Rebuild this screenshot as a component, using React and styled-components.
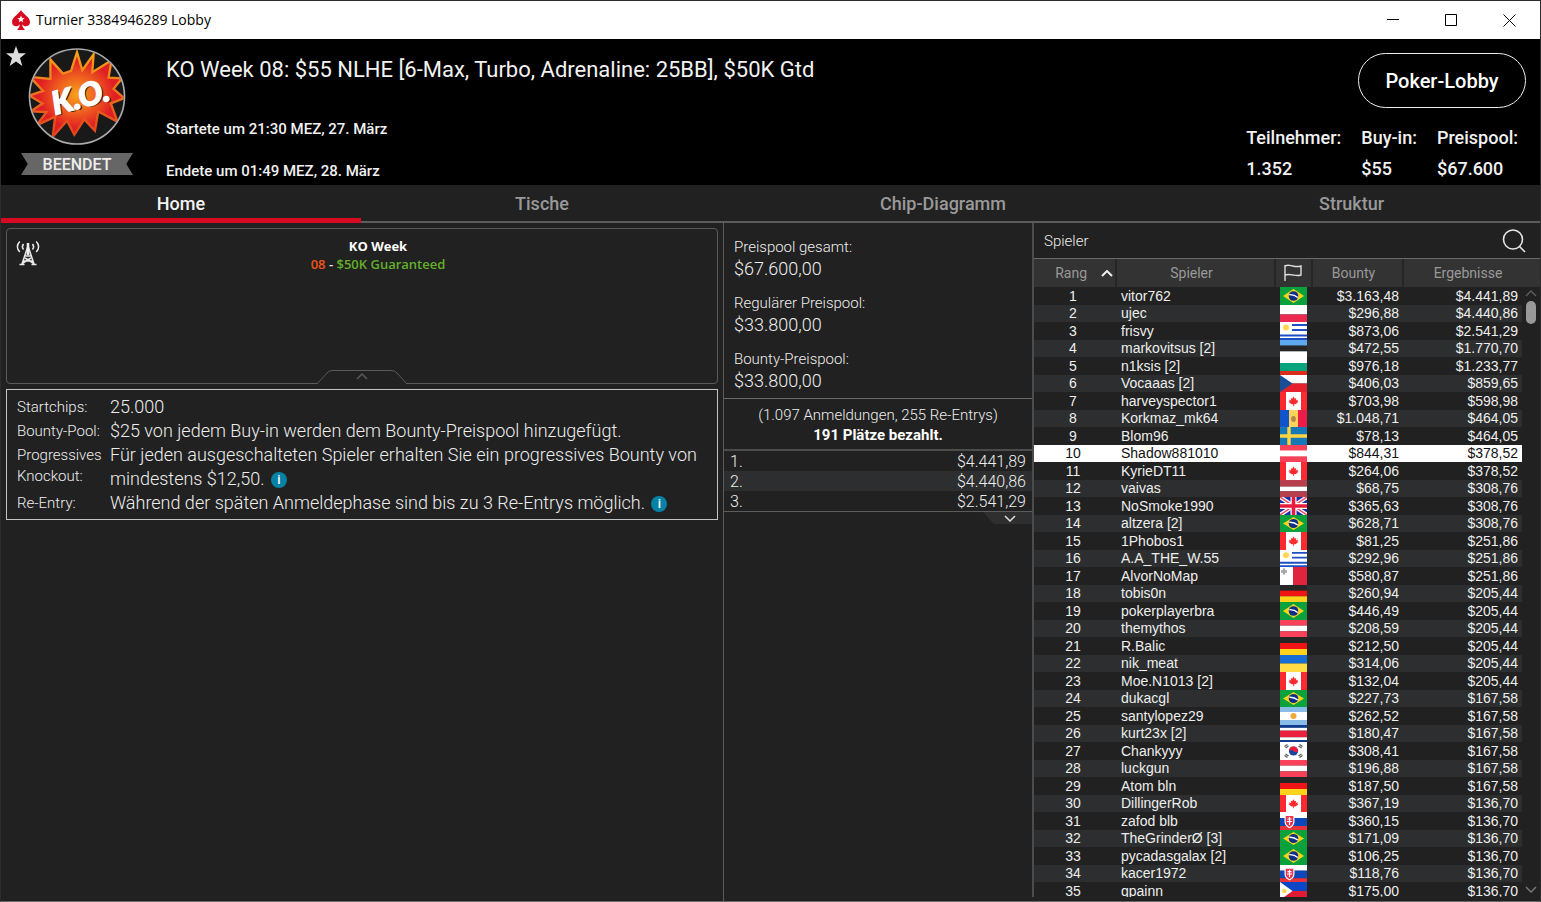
import React from 'react'
import styled, { createGlobalStyle } from 'styled-components'

const GlobalStyle = createGlobalStyle`
* {
  box-sizing: border-box;
}

body {
  margin: 0;
  background: #212121;
}

button {
  padding: 0;
  border: 0;
  background: none;
  color: inherit;
  font: inherit;
}

svg {
  display: block;
}
`

const players = [
  [1, 'vitor762', 'br', '$3.163,48', '$4.441,89'],
  [2, 'ujec', 'pl', '$296,88', '$4.440,86'],
  [3, 'frisvy', 'uy', '$873,06', '$2.541,29'],
  [4, 'markovitsus [2]', 'ee', '$472,55', '$1.770,70'],
  [5, 'n1ksis [2]', 'bg', '$976,18', '$1.233,77'],
  [6, 'Vocaaas [2]', 'cz', '$406,03', '$859,65'],
  [7, 'harveyspector1', 'ca', '$703,98', '$598,98'],
  [8, 'Korkmaz_mk64', 'md', '$1.048,71', '$464,05'],
  [9, 'Blom96', 'se', '$78,13', '$464,05'],
  [10, 'Shadow881010', 'at', '$844,31', '$378,52'],
  [11, 'KyrieDT11', 'ca', '$264,06', '$378,52'],
  [12, 'vaivas', 'lv', '$68,75', '$308,76'],
  [13, 'NoSmoke1990', 'gb', '$365,63', '$308,76'],
  [14, 'altzera [2]', 'br', '$628,71', '$308,76'],
  [15, '1Phobos1', 'ca', '$81,25', '$251,86'],
  [16, 'A.A_THE_W.55', 'uy', '$292,96', '$251,86'],
  [17, 'AlvorNoMap', 'mt', '$580,87', '$251,86'],
  [18, 'tobis0n', 'de', '$260,94', '$205,44'],
  [19, 'pokerplayerbra', 'br', '$446,49', '$205,44'],
  [20, 'themythos', 'at', '$208,59', '$205,44'],
  [21, 'R.Balic', 'de', '$212,50', '$205,44'],
  [22, 'nik_meat', 'ua', '$314,06', '$205,44'],
  [23, 'Moe.N1013 [2]', 'ca', '$132,04', '$205,44'],
  [24, 'dukacgl', 'br', '$227,73', '$167,58'],
  [25, 'santylopez29', 'ar', '$262,52', '$167,58'],
  [26, 'kurt23x [2]', 'cr', '$180,47', '$167,58'],
  [27, 'Chankyyy', 'kr', '$308,41', '$167,58'],
  [28, 'luckgun', 'at', '$196,88', '$167,58'],
  [29, 'Atom bln', 'de', '$187,50', '$167,58'],
  [30, 'DillingerRob', 'ca', '$367,19', '$136,70'],
  [31, 'zafod blb', 'sk', '$360,15', '$136,70'],
  [32, 'TheGrinderØ [3]', 'br', '$171,09', '$136,70'],
  [33, 'pycadasgalax [2]', 'br', '$106,25', '$136,70'],
  [34, 'kacer1972', 'sk', '$118,76', '$136,70'],
  [35, 'qpainn', 'ph', '$175,00', '$136,70']
]

// horizontal bands: [colour, height], drawn from the top
const Bands = ({ of }) => {
  let y = 0
  return of.map(([fill, h], i) => {
    const band = <rect key={i} y={y} width='27' height={h} fill={fill} />
    y += h
    return band
  })
}

const flags = {
  br: (
    <>
      <rect width='27' height='18' fill='#0ba13c' />
      <path d='M3 9L13.500 2L24 9L13.500 16z' fill='#fbd51c' />
      <circle cx='13.500' cy='9' r='4.800' fill='#0b3087' />
      <path d='M9.300 7.700C12.300 7.500 15.500 8.500 17.800 10.500' stroke='#fff' strokeWidth='1.400' fill='none' />
    </>
  ),
  pl: <Bands of={[['#fff', 10], ['#ec2a50', 8]]} />,
  uy: (
    <>
      <rect width='27' height='18' fill='#fff' />
      <path d='M12 3h15M12 8h15M0 13.500h27M0 17h27' stroke='#1c4fc4' strokeWidth='1.900' />
      <circle cx='6' cy='5.500' r='3' fill='#ffd84f' />
    </>
  ),
  ee: <Bands of={[['#5fa9ee', 6], ['#262626', 6], ['#fff', 6]]} />,
  bg: <Bands of={[['#fff', 6], ['#0aa37b', 8], ['#dd2c1c', 4]]} />,
  cz: (
    <>
      <Bands of={[['#fff', 9], ['#e6202c', 9]]} />
      <path d='M0 0L12.500 9L0 18z' fill='#1a4f98' />
    </>
  ),
  ca: (
    <>
      <rect width='27' height='18' fill='#fff' />
      <path d='M0 0h6v18H0zM21 0h6v18h-6z' fill='#ff2a2f' />
      <path d='M13.500 4.500l1.300 2.200 1.400-.6-.4 2.400 2-.9-.3 1.800 1 .4-3 2.400h-1.600v1.900h-.8v-1.900h-1.600l-3-2.400 1-.4-.3-1.800 2 .9-.4-2.400 1.400.6z' fill='#ff2a2f' />
    </>
  ),
  md: (
    <>
      <rect width='9' height='18' fill='#1054cc' />
      <rect x='9' width='9' height='18' fill='#ffd25a' />
      <rect x='18' width='9' height='18' fill='#ec1c48' />
      <ellipse cx='13.500' cy='9.500' rx='2.400' ry='3.200' fill='#b3864a' />
    </>
  ),
  se: (
    <>
      <rect width='27' height='18' fill='#1778b8' />
      <path d='M9 0v18M0 9h27' stroke='#ffd23f' strokeWidth='3.400' />
    </>
  ),
  at: <Bands of={[['#f9415a', 6], ['#fff', 6], ['#f9415a', 6]]} />,
  lv: <Bands of={[['#b73e4c', 7], ['#fff', 5], ['#b73e4c', 6]]} />,
  gb: (
    <>
      <rect width='27' height='18' fill='#1a2fa8' />
      <path d='M0 0L27 18M27 0L0 18' stroke='#fff' strokeWidth='4' />
      <path d='M0 0L27 18M27 0L0 18' stroke='#f0506e' strokeWidth='1.500' />
      <path d='M13.500 0v18M0 9h27' stroke='#fff' strokeWidth='6' />
      <path d='M13.500 0v18M0 9h27' stroke='#e81c3c' strokeWidth='3.600' />
    </>
  ),
  mt: (
    <>
      <rect width='27' height='18' fill='#fff' />
      <rect x='13' width='14' height='18' fill='#df2440' />
      <path d='M4 1.500v6M1 4.500h6' stroke='#a5a5a5' strokeWidth='2.400' />
    </>
  ),
  de: <Bands of={[['#262626', 6], ['#f01414', 6], ['#ffd21c', 6]]} />,
  ua: <Bands of={[['#176ed2', 9], ['#ffdc46', 9]]} />,
  ar: (
    <>
      <Bands of={[['#8abce8', 5], ['#fff', 8], ['#8abce8', 5]]} />
      <circle cx='13.500' cy='9' r='3' fill='#f0a838' />
    </>
  ),
  cr: <Bands of={[['#0f3c90', 3], ['#fff', 3], ['#e8203c', 7], ['#fff', 3], ['#0f3c90', 2]]} />,
  kr: (
    <>
      <rect width='27' height='18' fill='#fff' />
      <circle cx='13.500' cy='9' r='4.600' fill='#1448a0' />
      <path d='M8.900 9a4.600 4.600 0 0 1 9.200 0c-1.500 2-3.500 1.500-4.600 0s-3-1.500-4.600 0z' fill='#e81c3c' />
      <path d='M4.500 4.500l3-2M5.500 6l3-2M4.500 13.500l3 2M5.500 12l3 2M22.500 4.500l-3-2M21.500 6l-3-2M22.500 13.500l-3 2M21.500 12l-3 2' stroke='#555' strokeWidth='1.200' />
    </>
  ),
  sk: (
    <>
      <Bands of={[['#fff', 6], ['#0d47b8', 8], ['#e8323c', 4]]} />
      <path d='M4.500 3h10v6.500c0 3.500-2.500 5.500-5 6.800-2.500-1.300-5-3.300-5-6.800z' fill='#fff' />
      <path d='M5.700 4h7.600v5.500c0 2.800-1.800 4.500-3.800 5.500-2-1-3.800-2.700-3.800-5.500z' fill='#ec3450' />
      <path d='M9.500 5v8M7.500 7h4M7 9.500h5' stroke='#fff' strokeWidth='1.200' />
    </>
  ),
  ph: (
    <>
      <Bands of={[['#0d47c8', 9], ['#e01c34', 9]]} />
      <path d='M0 0L12.500 9L0 18z' fill='#fff' />
      <circle cx='4.300' cy='9' r='2.200' fill='#ffd84f' />
    </>
  )
}

const Window = styled.div`
display: flex;
flex-direction: column;
height: 100vh;
border: 1px solid #2c2c2c;
border-bottom-color: #666;
background: #212121;
color: #eee;
font-family: Roboto, "Liberation Sans", sans-serif;
`

const TitleBar = styled.div`
display: flex;
flex: none;
align-items: center;
height: 38px;
padding: 0 2px 0 11px;
background: #fff;
color: #000;
font: 14px/20px "Open Sans", sans-serif;

span {
  flex: 1;
  margin-left: 6px;
}
`

const WindowButton = styled.button`
display: flex;
align-items: center;
justify-content: center;
width: 58px;
height: 36px;
`

const Header = styled.header`
display: flex;
flex: none;
height: 146px;
background: #000;
color: #f2f2f2;
`

const Emblem = styled.div`
display: flex;
width: 165px;
padding: 7px 0 0 4px;
`

const Favourite = styled.button`
align-self: flex-start;
width: 22px;
height: 20px;
`

const Badge = styled.div`
display: flex;
flex-direction: column;
align-items: center;
width: 112px;
margin-left: -6px;
padding-top: 2px;
`

const Ribbon = styled.div`
width: 112px;
height: 22px;
margin-top: 8px;
background: #666;
clip-path: polygon(0 0, 100% 0, 94% 50%, 100% 100%, 0 100%, 6% 50%);
color: #eee;
font-size: 16px;
font-weight: 500;
line-height: 24px;
text-align: center;
`

const Summary = styled.div`
flex: 1;
padding-top: 17px;
font-size: 15px;
font-weight: 500;
line-height: 20px;

h1 {
  margin: 0 0 35px;
  font-size: 22px;
  font-weight: 400;
  line-height: 28px;
}

p {
  margin: 0 0 22px;
}
`

const HeaderSide = styled.div`
display: flex;
flex-direction: column;
align-items: flex-end;
padding: 14px 14px 0 0;
`

const LobbyButton = styled.button`
width: 168px;
height: 55px;
border: 1px solid #eee;
border-radius: 28px;
color: #fff;
font-size: 20px;
font-weight: 500;
`

const Stats = styled.dl`
display: flex;
gap: 20px;
margin: 14px 8px 0 0;
font-size: 18px;
font-weight: 500;
line-height: 31px;

dd {
  margin: 0;
}
`

const Tabs = styled.nav`
display: grid;
flex: none;
grid-template-columns: 360fr 362fr 440fr 377fr;
height: 38px;
box-shadow: inset 0 -2px #5c5c5c;
`

const Tab = styled.button`
padding-top: 5px;
border-bottom: 5px solid ${p => p.$active ? '#d70a22' : 'transparent'};
color: ${p => p.$active ? '#f2f2f2' : '#999'};
font-size: 18px;
font-weight: 500;
line-height: 28px;
`

const Content = styled.main`
display: grid;
flex: 1;
grid-template-columns: minmax(0, 1fr) 309px 508px;
min-height: 0;
`

const HomePane = styled.section`
display: flex;
flex-direction: column;
gap: 5px;
padding: 5px 5px 0;
`

const Announcement = styled.div`
position: relative;
height: 156px;
padding: 8px 0 0 32px;
border: 1px solid #5a5a5a;
border-radius: 4px;
font: 600 13px/18px "Open Sans", sans-serif;
text-align: center;

h2 {
  margin: 0;
  color: #fff;
  font-size: 13px;
  font-weight: 700;
}
`

const Tower = styled.svg`
position: absolute;
top: 11px;
left: 9px;
`

const CollapseButton = styled.button`
position: absolute;
bottom: -1px;
left: calc(50% - 45px);
`

const Accent = styled.span`
color: ${p => p.$color};
`

const Details = styled.dl`
display: grid;
grid-template-columns: 93px 1fr;
margin: 0;
padding: 5px 10px 4px;
border: 1px solid #c4c4c4;
font-weight: 300;
line-height: 24px;

dt {
  padding-top: 2px;
  font-size: 15px;
  line-height: 21px;
}

dd {
  margin: 0;
  font-size: 18px;
}
`

const InfoButton = styled.button`
display: inline-flex;
justify-content: center;
width: 16px;
height: 16px;
margin-left: 2px;
border-radius: 8px;
background: #0582a5;
color: #fff;
font-size: 13px;
font-weight: 500;
line-height: 16px;
vertical-align: 1px;
`

const PrizePane = styled.section`
border-left: 1px solid #5c5c5c;
font-weight: 300;
`

const Pools = styled.dl`
display: grid;
gap: 12px;
margin: 0;
padding: 13px 10px 6px;
border-bottom: 1px solid #6a6a6a;
line-height: 22px;

dt {
  font-size: 15px;
}

dd {
  margin: 0;
  font-size: 18px;
}
`

const Entries = styled.div`
padding: 6px 0 4px;
border-bottom: 2px solid #4c4c4c;
font-size: 15px;
line-height: 20px;
text-align: center;

strong {
  display: block;
  color: #fff;
  font-weight: 700;
}
`

const Payouts = styled.table`
width: 100%;
border-collapse: collapse;
border-bottom: 1px solid #5c5c5c;
font-size: 16px;
line-height: 18px;

td {
  padding: 2px 6px 0;
}

td:last-child {
  text-align: right;
}

tr:nth-child(even) {
  background: #2c2e2f;
}
`

const ExpandButton = styled.button`
display: flex;
align-items: center;
justify-content: center;
width: 49px;
height: 12px;
margin-left: auto;
padding-left: 4px;
background: #2f2f2f;
clip-path: polygon(0 0, 100% 0, 100% 100%, 22% 100%);
`

const PlayersPane = styled.section`
display: flex;
flex-direction: column;
min-height: 0;
margin-bottom: 4px;
border-left: 2px solid #4c4c4c;
`

const SearchBar = styled.div`
display: flex;
flex: none;
align-items: center;
justify-content: space-between;
height: 36px;
padding: 0 14px 0 10px;
border-bottom: 1px solid #6a6a6a;

h2 {
  margin: 0;
  font-size: 15px;
  font-weight: 300;
}
`

const PlayerScroll = styled.div`
position: relative;
flex: 1;
min-height: 0;
overflow: hidden;
`

const PlayerTable = styled.table`
width: 100%;
border-collapse: collapse;
table-layout: fixed;
font: 14px/17px "Liberation Sans", Arial, sans-serif;

th {
  height: 28px;
  padding: 0 8px 0 0;
  border-left: 2px solid #262626;
  background: #333;
  color: #999;
  font: 400 14px/28px Roboto, sans-serif;
}

th:first-child {
  border-left: 0;
}

td {
  overflow: hidden;
  height: 17px;
  padding: 0 4px;
  text-align: right;
  white-space: nowrap;
}

td:nth-child(1) {
  padding-right: 8px;
  text-align: center;
}

td:nth-child(2) {
  padding-left: 5px;
  text-align: left;
}

td:nth-child(3) {
  padding: 0 5px;
}
`

const PlayerRow = styled.tr`
&:nth-child(odd) td {
  height: 18px;
}

&:nth-child(even) td:not(:last-child) {
  background: #2c2e2f;
}

&&[data-self=true] td:not(:last-child) {
  background: #fff;
  color: #111;
}
`

const Col = styled.col`
width: ${p => p.$width};
`

const RankHead = styled.span`
display: flex;
align-items: center;
justify-content: flex-end;
gap: 14px;
margin-right: -6px;
`

const FlagIcon = styled.svg`
margin: 0 auto;
`

const HeadFlag = styled.svg`
margin-left: 8px;
`

const ScrollBar = styled.div`
position: absolute;
top: 28px;
right: 3px;
bottom: 4px;
display: flex;
flex-direction: column;
align-items: center;
justify-content: space-between;
width: 12px;
padding-top: 3px;
`

const Thumb = styled.div`
flex: none;
width: 10px;
height: 23px;
margin: 4px 0 auto;
border-radius: 5px;
background: #999;
`

const Chevron = ({ up, color, width = 12, height = 7, stroke = 2 }) => (
  <svg width={width} height={height} viewBox='0 0 12 7' fill='none' stroke={color} strokeWidth={stroke}>
    <path d={up ? 'M1 6L6 1L11 6' : 'M1 1L6 6L11 1'} />
  </svg>
)

const Flag = ({ code, tall }) => (
  <FlagIcon width='27' height={tall ? 18 : 17} viewBox='0 0 27 18' preserveAspectRatio='none' role='img' aria-label={code}>
    {flags[code]}
  </FlagIcon>
)

const KoBadge = () => (
  <svg width='98' height='97' viewBox='84 25 292 292'>
    <defs>
      <radialGradient id='blast'>
        <stop offset='0' stopColor='#f9a01b' />
        <stop offset='.4' stopColor='#f0641e' />
        <stop offset='.8' stopColor='#e01f23' />
      </radialGradient>
      <linearGradient id='edge' x1='0' y1='0' x2='0' y2='1'>
        <stop offset='0' stopColor='#f7a01a' />
        <stop offset='1' stopColor='#e0421f' />
      </linearGradient>
      <clipPath id='disc'><circle cx='230' cy='171' r='141' /></clipPath>
    </defs>
    <circle cx='230' cy='171' r='143' fill='#191919' />
    <g clipPath='url(#disc)'>
      <path
        d='M150 60L188 102L212 94L230 38L246 92L280 44L276 98L334 62L325 114L366 116L340 148L372 176L332 192L352 247L294 216L284 274L252 240L222 286L200 244L157 292L164 232L108 258L138 218L90 216L126 192L86 168L128 154L88 112L150 118z'
        fill='url(#blast)' stroke='url(#edge)' strokeWidth='7'
      />
    </g>
    <circle cx='230' cy='171' r='143' fill='none' stroke='#aaa' strokeWidth='5' />
    <g fontFamily='Lato, sans-serif' fontWeight='900' fontStyle='italic' fontSize='96' textAnchor='middle'>
      <text x='245' y='209' fill='#3a1510' transform='rotate(-15 241 172)'>K.O.</text>
      <text x='240' y='205' fill='#fff' stroke='#fff' strokeWidth='4' transform='rotate(-15 241 172)'>K.O.</text>
    </g>
  </svg>
)

const App = () => (
  <>
    <GlobalStyle />
    <Window>
      <TitleBar>
        <svg width='18' height='20' viewBox='0 0 18 20'>
          <path d='M9 0C7 4 0 7 0 12c0 3 2 4.300 4.200 4.300 1.600 0 2.900-.9 3.600-2.100-.1 2-.8 3.800-2.300 4.800V20h7v-1c-1.500-1-2.200-2.800-2.300-4.800.7 1.200 2 2.100 3.600 2.100C16 16.300 18 15 18 12c0-5-7-8-9-12z' fill='#d70a22' />
          <path d='M9 5.500l1 2.400 2.600.2-2 1.700.6 2.500L9 10.900l-2.200 1.400.6-2.500-2-1.700 2.600-.2z' fill='#fff' />
        </svg>
        <span>Turnier 3384946289 Lobby</span>
        <WindowButton aria-label='Minimieren'>
          <svg width='13' height='13' stroke='#000'><path d='M0 5.500h12' /></svg>
        </WindowButton>
        <WindowButton aria-label='Maximieren'>
          <svg width='13' height='13' stroke='#000' fill='none'><path d='M.5 .5h11v11h-11z' /></svg>
        </WindowButton>
        <WindowButton aria-label='Schließen'>
          <svg width='13' height='13' stroke='#000'><path d='M.5 .5l12 12M12.500 .5l-12 12' /></svg>
        </WindowButton>
      </TitleBar>

      <Header>
        <Emblem>
          <Favourite aria-label='Favorit'>
            <svg width='22' height='20' viewBox='0 0 22 20'>
              <path d='M11 0l2.600 7.300H21l-6 4.700 2.300 8L11 15.600 4.700 20 7 12 1 7.300h7.400z' fill='#ddd' />
            </svg>
          </Favourite>
          <Badge>
            <KoBadge />
            <Ribbon>BEENDET</Ribbon>
          </Badge>
        </Emblem>
        <Summary>
          <h1>KO Week 08: $55 NLHE [6-Max, Turbo, Adrenaline: 25BB], $50K Gtd</h1>
          <p>Startete um 21:30 MEZ, 27. März</p>
          <p>Endete um 01:49 MEZ, 28. März</p>
        </Summary>
        <HeaderSide>
          <LobbyButton>Poker-Lobby</LobbyButton>
          <Stats>
            <div>
              <dt>Teilnehmer:</dt>
              <dd>1.352</dd>
            </div>
            <div>
              <dt>Buy-in:</dt>
              <dd>$55</dd>
            </div>
            <div>
              <dt>Preispool:</dt>
              <dd>$67.600</dd>
            </div>
          </Stats>
        </HeaderSide>
      </Header>

      <Tabs>
        <Tab $active>Home</Tab>
        <Tab>Tische</Tab>
        <Tab>Chip-Diagramm</Tab>
        <Tab>Struktur</Tab>
      </Tabs>

      <Content>
        <HomePane>
          <Announcement>
            <Tower width='24' height='26' viewBox='0 0 24 26' fill='none' stroke='#ececec' strokeWidth='1.500'>
              <path d='M12 6L6 24M12 6l6 18M9.500 16h5M7.500 21h9M9 18l9 5.500M15 18l-9 5.500M3.500 24.500h5M15.500 24.500h5' />
              <path d='M12 3v12' strokeWidth='2.600' />
              <path d='M7.500 4c-1.300 1.600-1.300 3.800 0 5.500M16.500 4c1.300 1.600 1.300 3.800 0 5.500M3.800 1.500c-3.200 3-3.200 7.500 0 10.500M20.200 1.500c3.200 3 3.200 7.500 0 10.500' />
            </Tower>
            <h2>KO Week</h2>
            <Accent $color='#f0531c'>08</Accent> - <Accent $color='#64b02a'>$50K Guaranteed</Accent>
            <CollapseButton aria-label='Einklappen'>
              <svg width='90' height='14' viewBox='0 0 90 14' fill='#212121' stroke='#5a5a5a'>
                <path d='M0 14L10 3Q12 .5 15 .5H74Q78 .5 80 3L90 14' />
                <path d='M40 9l5-5 5 5' strokeWidth='1.500' fill='none' />
              </svg>
            </CollapseButton>
          </Announcement>
          <Details>
            <dt>Startchips:</dt>
            <dd>25.000</dd>
            <dt>Bounty-Pool:</dt>
            <dd>$25 von jedem Buy-in werden dem Bounty-Preispool hinzugefügt.</dd>
            <dt>Progressives Knockout:</dt>
            <dd>
              <span>Für jeden ausgeschalteten Spieler erhalten Sie ein progressives Bounty von </span>
              <span>mindestens $12,50. </span>
              <InfoButton>i</InfoButton>
            </dd>
            <dt>Re-Entry:</dt>
            <dd>
              <span>Während der späten Anmeldephase sind bis zu 3 Re-Entrys möglich. </span>
              <InfoButton>i</InfoButton>
            </dd>
          </Details>
        </HomePane>

        <PrizePane>
          <Pools>
            <div>
              <dt>Preispool gesamt:</dt>
              <dd>$67.600,00</dd>
            </div>
            <div>
              <dt>Regulärer Preispool:</dt>
              <dd>$33.800,00</dd>
            </div>
            <div>
              <dt>Bounty-Preispool:</dt>
              <dd>$33.800,00</dd>
            </div>
          </Pools>
          <Entries>
            (1.097 Anmeldungen, 255 Re-Entrys)
            <strong>191 Plätze bezahlt.</strong>
          </Entries>
          <Payouts>
            <tbody>
              {players.slice(0, 3).map(([rank, , , , prize]) => (
                <tr key={rank}>
                  <td>{rank}.</td>
                  <td>{prize}</td>
                </tr>
              ))}
            </tbody>
          </Payouts>
          <ExpandButton aria-label='Mehr anzeigen'>
            <Chevron color='#ddd' stroke={1.500} />
          </ExpandButton>
        </PrizePane>

        <PlayersPane>
          <SearchBar>
            <h2>Spieler</h2>
            <button aria-label='Suchen'>
              <svg width='24' height='24' fill='none' stroke='#e6e6e6' strokeWidth='1.600'>
                <circle cx='11' cy='10.500' r='9.500' />
                <path d='M17.500 17.500l5.500 5.500' />
              </svg>
            </button>
          </SearchBar>
          <PlayerScroll>
            <PlayerTable>
              <colgroup>
                <Col $width='82px' />
                <Col $width='159px' />
                <Col $width='37px' />
                <Col $width='91px' />
                <Col $width='auto' />
                <Col $width='18px' />
              </colgroup>
              <thead>
                <tr>
                  <th><RankHead>Rang <Chevron up color='#eee' /></RankHead></th>
                  <th>Spieler</th>
                  <th>
                    <HeadFlag width='18' height='18' fill='none' stroke='#ddd' strokeWidth='1.400'>
                      <path d='M1 1v16M1 2c3-1.500 5-.5 7.500 0S14 3 17 2v9c-3 1-5 .5-8 0s-5-1-8 0' />
                    </HeadFlag>
                  </th>
                  <th>Bounty</th>
                  <th colSpan='2'>Ergebnisse</th>
                </tr>
              </thead>
              <tbody>
                {players.map(([rank, name, country, bounty, prize]) => (
                  <PlayerRow key={rank} data-self={name === 'Shadow881010'}>
                    <td>{rank}</td>
                    <td>{name}</td>
                    <td><Flag code={country} tall={rank % 2 === 1} /></td>
                    <td>{bounty}</td>
                    <td>{prize}</td>
                    <td />
                  </PlayerRow>
                ))}
              </tbody>
            </PlayerTable>
            <ScrollBar>
              <Chevron up color='#5a5a5a' stroke={1.500} />
              <Thumb />
              <Chevron color='#777' stroke={1.500} />
            </ScrollBar>
          </PlayerScroll>
        </PlayersPane>
      </Content>
    </Window>
  </>
)

export default App
